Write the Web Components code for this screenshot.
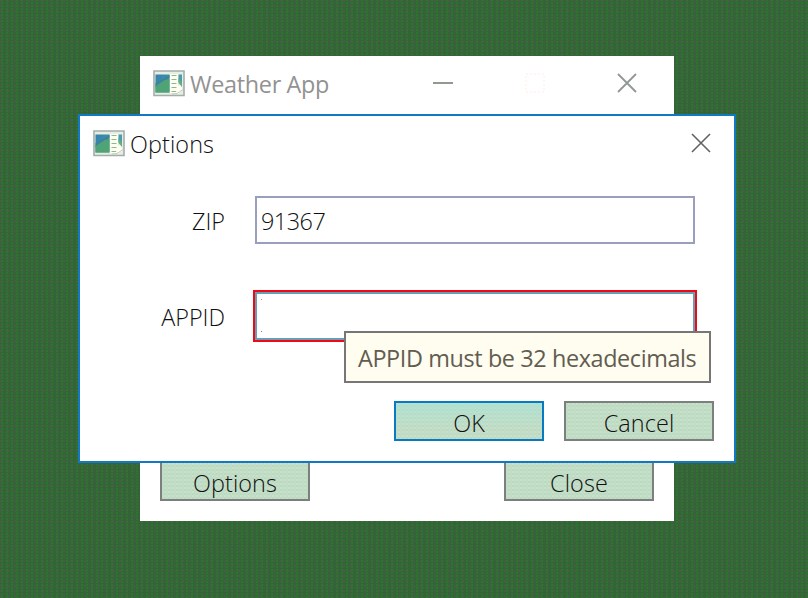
<!DOCTYPE html>
<html lang="en">
<head>
<meta charset="utf-8">
<title>Weather App</title>
<style>
html,body{margin:0;height:100%;overflow:hidden}
</style>
</head>
<body>
<desk-top>
  <app-window class="main" heading="Weather App" controls="all">
    <button-bar class="split">
      <push-button>Options</push-button>
      <push-button>Close</push-button>
    </button-bar>
  </app-window>
  <app-window class="dialog" heading="Options" controls="close" active>
    <form-row label="ZIP"><text-field>91367</text-field></form-row>
    <form-row label="APPID"><text-field invalid></text-field></form-row>
    <tool-tip>APPID must be 32 hexadecimals</tool-tip>
    <button-bar>
      <push-button primary>OK</push-button>
      <push-button>Cancel</push-button>
    </button-bar>
  </app-window>
</desk-top>
<script>
function define(name, html) {
  const t = document.createElement('template');
  customElements.define(name, class extends HTMLElement {
    constructor() {
      super();
      t.innerHTML = typeof html === 'function' ? html(this) : html;
      this.attachShadow({mode: 'open'}).append(t.content.cloneNode(true));
    }
  });
}

define('desk-top', `<style>
:host{display:block;position:relative;width:808px;height:598px;overflow:hidden;
 font:400 23.4px/32px "Open Sans","Noto Sans",sans-serif;color:#101010;
 background:radial-gradient(circle at 1px 1px,#66526466 .7px,transparent .8px) 0 0/7px 5px,
 radial-gradient(circle at 1px 1px,#208f2077 .7px,transparent .8px) 1px 2px/5px 3px,
 conic-gradient(#286b2c 25%,#435a45 0 50%,#286b2c 0 75%,#435a45 0) 0 0/2px 2px}
::slotted(.main){position:absolute;left:140px;top:56px;width:534px;height:465px}
::slotted(.dialog){position:absolute;left:78px;top:114px;width:658px;height:349px}
</style><slot></slot>`);

define('app-icon', `<style>:host{display:block;width:32px;height:27px}svg{display:block}</style>
<svg width="32" height="27" viewBox="0 0 32 27">
<defs><linearGradient id="b" x2="1" y2="1"><stop stop-color="#347fb5"/><stop offset=".45" stop-color="#3d8fa3"/><stop offset="1" stop-color="#59ad75"/></linearGradient></defs>
<path d="M1 1h30v24.500H1z" fill="#e4eee2" stroke="#a5ada9" stroke-width="1.6"/>
<path d="M2.500 4.500h14v18h-14z" fill="url(#b)"/><path d="M2.500 16C6 11 11 10 16.500 9v13.500h-14z" fill="#4fa377"/><path d="M2.500 13C7 11 10 9 16.500 5v3C10 11 6 13 2.500 17z" fill="#3c83a0"/>
<path d="M17 4h8v19h-8z" fill="#fcfff2"/><path d="M18.500 5.500h5M18.500 9.500h5M18.500 13.500h5M18.500 17.500h5M18.500 21.500h5" stroke="#8eb78f"/>
<path d="M25.500 4.500h3.500v11l-3.500-4z" fill="#4c9db0"/><path d="M25.500 8l3.500 5v4l-3.500-4z" fill="#65b17b"/>
<path d="M24 16l3-1 3 5-5 4h-5l4-3z" fill="#fffff5"/><path d="M19 24l5-.5 6-4" fill="none" stroke="#c1c9b8"/>
</svg>`);

define('caption-glyph', el => {
  const d = {min: 'M0 10H20', max: 'M1 1H19V19H1Z', close: 'M1 1L19 19M19 1L1 19'}[el.getAttribute('kind')];
  return `<style>:host{display:block;width:20px;height:20px}svg{display:block;overflow:visible}</style>
  <svg width="20" height="20" fill="none" stroke="currentColor" stroke-width="${el.getAttribute('weight')}" ${el.getAttribute('kind') === 'max' ? 'stroke-dasharray="2 2"' : ''}><path d="${d}"/></svg>`;
});

define('app-window', el => {
  const all = el.getAttribute('controls') === 'all';
  return `<style>
:host{display:flex;flex-direction:column;box-sizing:border-box;background:#fff}
:host([active]){border:2px solid #1278c4}
header{display:flex;align-items:center;height:54px;padding:0 ${all ? 37 : 23}px 0 13px;flex:none}
h1{font:inherit;margin:0 auto 0 5px;padding-top:2px;color:${all ? '#929292' : 'inherit'};letter-spacing:${all ? '-.32px' : '.1px'}}
nav{display:flex;gap:72px}
main{flex:1;display:flex;flex-direction:column}
:host(.main) main{justify-content:flex-end;padding:0 20px 20px}
:host(.dialog){font-weight:300}
:host(.dialog) main{padding:22px 20px 20px}
</style>
<header><app-icon></app-icon><h1>${el.getAttribute('heading')}</h1><nav>
${all ? '<caption-glyph kind="min" weight="2" style="color:#90998f"></caption-glyph><caption-glyph kind="max" weight="1" style="color:#ffeee4"></caption-glyph>' : ''}
<caption-glyph kind="close" weight="${all ? 1.8 : 1.6}" style="color:${all ? '#919794' : '#626262'}"></caption-glyph></nav></header>
<main><slot></slot></main>`;
});

define('form-row', el => `<style>
:host{display:grid;grid-template-columns:125px 1fr;column-gap:30px;align-items:center;height:56px;margin-bottom:40px;margin-right:19px}
label{text-align:right;padding-top:1px;letter-spacing:0}
</style><label>${el.getAttribute('label')}</label><slot></slot>`);

define('text-field', `<style>
:host{display:block;box-sizing:border-box;height:48px;border:2px solid #999fbd;background:#fff;padding:7px 4px 0;letter-spacing:-.5px}
:host([invalid]){border-color:#659eb9;outline:2px solid #f00812;
background:radial-gradient(circle,#777 .6px,transparent .8px) 4px 4px/2px 32px repeat-y #fff;background-size:2px 32px}
:host([invalid]){background:linear-gradient(#999 0 0) 4px 5px/1px 1px no-repeat,linear-gradient(#777 0 0) 4px 37px/1px 1px no-repeat,#fff}
</style><slot></slot>`);

define('tool-tip', `<style>
:host{position:absolute;left:264px;top:215px;width:367px;height:52px;box-sizing:border-box;border:2px solid #777575;background:#fffdf0;color:#625c50;padding:9px 0 0 12px;white-space:nowrap;letter-spacing:-.38px;font-weight:400}
</style><slot></slot>`);

define('button-bar', `<style>
:host{display:flex;justify-content:flex-end;gap:20px;margin-top:auto;font-weight:300}
:host(.split){justify-content:space-between}
</style><slot></slot>`);

define('push-button', `<style>
:host{display:block}
button{display:block;width:150px;height:40px;box-sizing:border-box;border:2px solid #7b807e;padding:3px 0 0;font:inherit;color:inherit;letter-spacing:.1px;
background:conic-gradient(#c9e0cd 25%,#b8dabd 0 50%,#c5dacd 0 75%,#bfddc0 0) 0 0/4px 4px}
:host([primary]) button{border-color:#087ac2;background:linear-gradient(#a4e4d899,#a4e4d800 70%),conic-gradient(#c9e0cd 25%,#b8dabd 0 50%,#c5dacd 0 75%,#bfddc0 0) 0 0/4px 4px}
</style><button><slot></slot></button>`);
</script>
</body>
</html>
